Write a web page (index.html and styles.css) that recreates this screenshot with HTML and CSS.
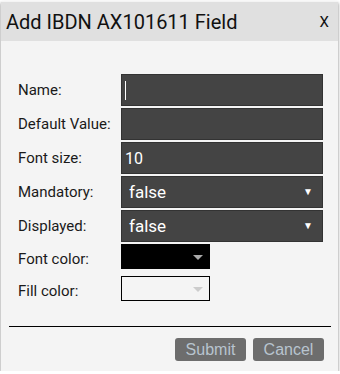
FILE: index.html
```html
<!DOCTYPE html>
<html lang="en">
<head>
  <meta charset="UTF-8">
  <title>Add Field</title>
  <link rel="stylesheet" href="styles.css">
</head>
<body>

  <div class="dialog">
    <div class="dialog-head">
      <span class="dialog-title">Add IBDN AX101611 Field</span>
      <span class="dialog-close">X</span>
    </div>

    <form class="field-form">
      <label>Name:</label>
      <div class="input"><span class="caret"></span></div>

      <label>Default Value:</label>
      <div class="input"></div>

      <label>Font size:</label>
      <div class="input">10</div>

      <label>Mandatory:</label>
      <div class="input select">false<span class="arrow">&#9660;</span></div>

      <label>Displayed:</label>
      <div class="input select">false<span class="arrow">&#9660;</span></div>

      <label class="color-label">Font color:</label>
      <div class="color-box font-color"><span class="color-arrow"></span></div>

      <label class="color-label fill">Fill color:</label>
      <div class="color-box fill-color"><span class="color-arrow"></span></div>
    </form>

    <div class="dialog-foot">
      <button class="btn">Submit</button>
      <button class="btn">Cancel</button>
    </div>
  </div>

</body>
</html>
```

FILE: styles.css
```css
body {
  margin: 0;
  background: #fff;
  font-family: Roboto, "Liberation Sans", sans-serif;
}

.dialog {
  margin: 1px 2px 0 1px;
  height: 370px;
  background: #f4f4f4;
  box-shadow: 0 2px 3px rgba(0,0,0,0.5);
  box-sizing: border-box;
  padding-top: 1px;
}

.dialog-head {
  height: 39px;
  background: #e0e0e0;
  display: flex;
  align-items: center;
  justify-content: space-between;
  padding: 0 9px 0 5px;
  color: #111;
}

.dialog-title {
  font-size: 20px;
}

.dialog-close {
  font-size: 15px;
}

.field-form {
  display: grid;
  grid-template-columns: 103px 202px;
  grid-template-rows: repeat(5, 32px) 30px 30px;
  row-gap: 2px;
  padding: 33px 0 0 17px;
  margin: 0;
}

.field-form label {
  font-size: 15px;
  color: #1a1a1a;
  display: flex;
  align-items: center;
}

.input {
  background: #444;
  border: 1px solid #333;
  color: #fff;
  font-size: 16px;
  display: flex;
  align-items: center;
  padding: 0 3px;
  position: relative;
}

.caret {
  width: 1px;
  height: 19px;
  background: #fff;
}

.select {
  padding-left: 7px;
  font-size: 17px;
}

.arrow {
  position: absolute;
  right: 9px;
  top: 9px;
  font-size: 10px;
}

.color-box {
  width: 89px;
  height: 25px;
  box-sizing: border-box;
  position: relative;
  align-self: start;
}

.font-color {
  background: #000;
}

.fill-color {
  border: 1px solid #000;
  background: #f4f4f4;
}

.color-label {
  align-self: start;
  height: 27px;
  padding-top: 2px;
  box-sizing: border-box;
}

.color-arrow {
  position: absolute;
  right: 7px;
  top: 11px;
  border-left: 5px solid transparent;
  border-right: 5px solid transparent;
  border-top: 5px solid #aaa;
}

.fill-color .color-arrow {
  right: 6px;
  top: 10px;
  border-top-color: #ccc;
}

.dialog-foot {
  margin: 20px 7px 0 8px;
  border-top: 1px solid #000;
  padding: 11px 7px 0 0;
  display: flex;
  justify-content: flex-end;
  gap: 7px;
}

.btn {
  width: 71px;
  height: 23px;
  border: none;
  border-radius: 3px;
  background: #6d6d6d;
  color: #b8c4cf;
  font-family: "Liberation Sans", Arial, sans-serif;
  font-size: 16px;
  padding: 0;
}
```
